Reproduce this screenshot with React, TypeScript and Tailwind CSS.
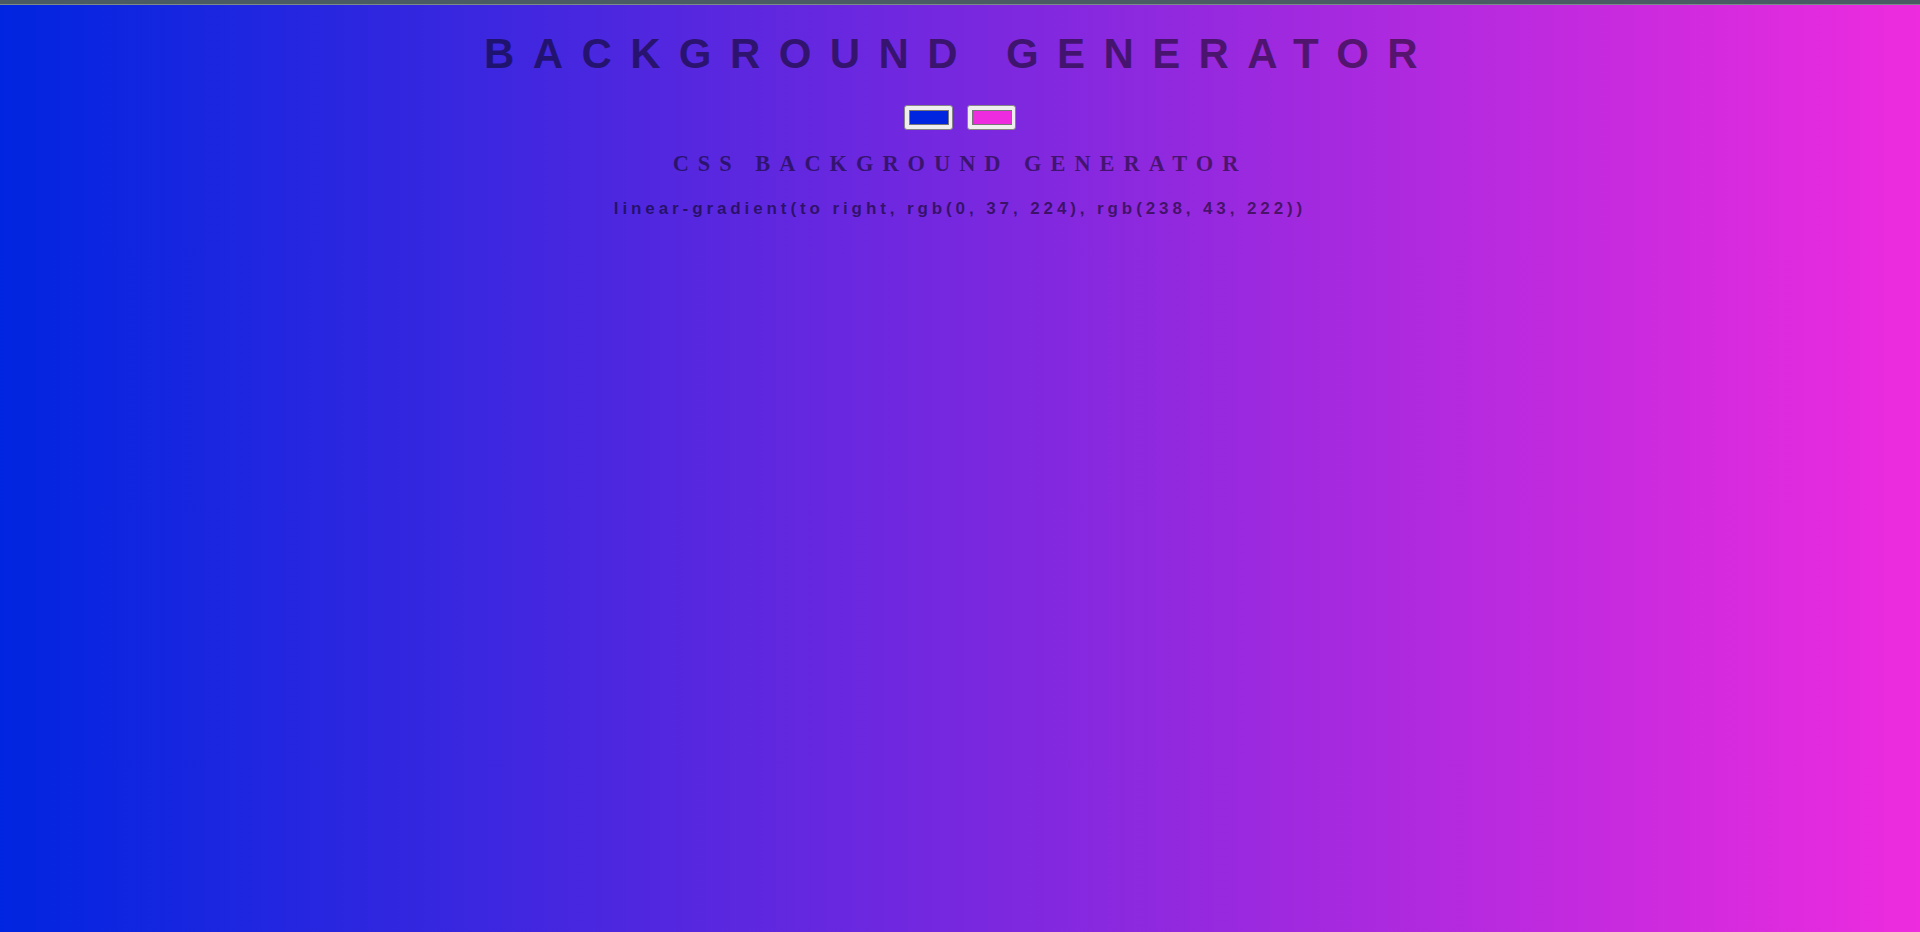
const startColor = 'rgb(0, 37, 224)';
const endColor = 'rgb(238, 43, 222)';

function Swatch({ color }: { color: string }) {
  return (
    <div className="flex h-[25px] w-[49px] items-center justify-center rounded-[3px] border border-[#858585] bg-[#efefef]">
      <div className="h-[15px] w-[40px] border border-[#777]" style={{ backgroundColor: color }} />
    </div>
  );
}

export default function App() {
  return (
    <div className="flex min-h-screen flex-col bg-[linear-gradient(to_right,rgb(0,37,224),rgb(238,43,222))] text-center">
      <div className="h-[4px] bg-[#4b5b63]" />
      <div className="h-px bg-[#7a8a8a]" />

      <h1 className="mt-[25px] font-['Liberation_Sans',Arial,sans-serif] text-[42px] font-bold leading-[48px] tracking-[18.4px] text-black/50">
        BACKGROUND GENERATOR
      </h1>

      <div className="mt-[27px] flex justify-center gap-[14px]">
        <Swatch color={startColor} />
        <Swatch color={endColor} />
      </div>

      <h3 className="mt-[20px] font-['Liberation_Serif','Times_New_Roman',serif] text-[22.4px] font-bold leading-[28px] tracking-[9px] text-black/50">
        CSS BACKGROUND GENERATOR
      </h3>

      <p className="mt-[21px] font-['Liberation_Sans',Arial,sans-serif] text-[17px] font-bold leading-[20px] tracking-[3.9px] text-black/55">
        linear-gradient(to right, {startColor}, {endColor})
      </p>
    </div>
  );
}
